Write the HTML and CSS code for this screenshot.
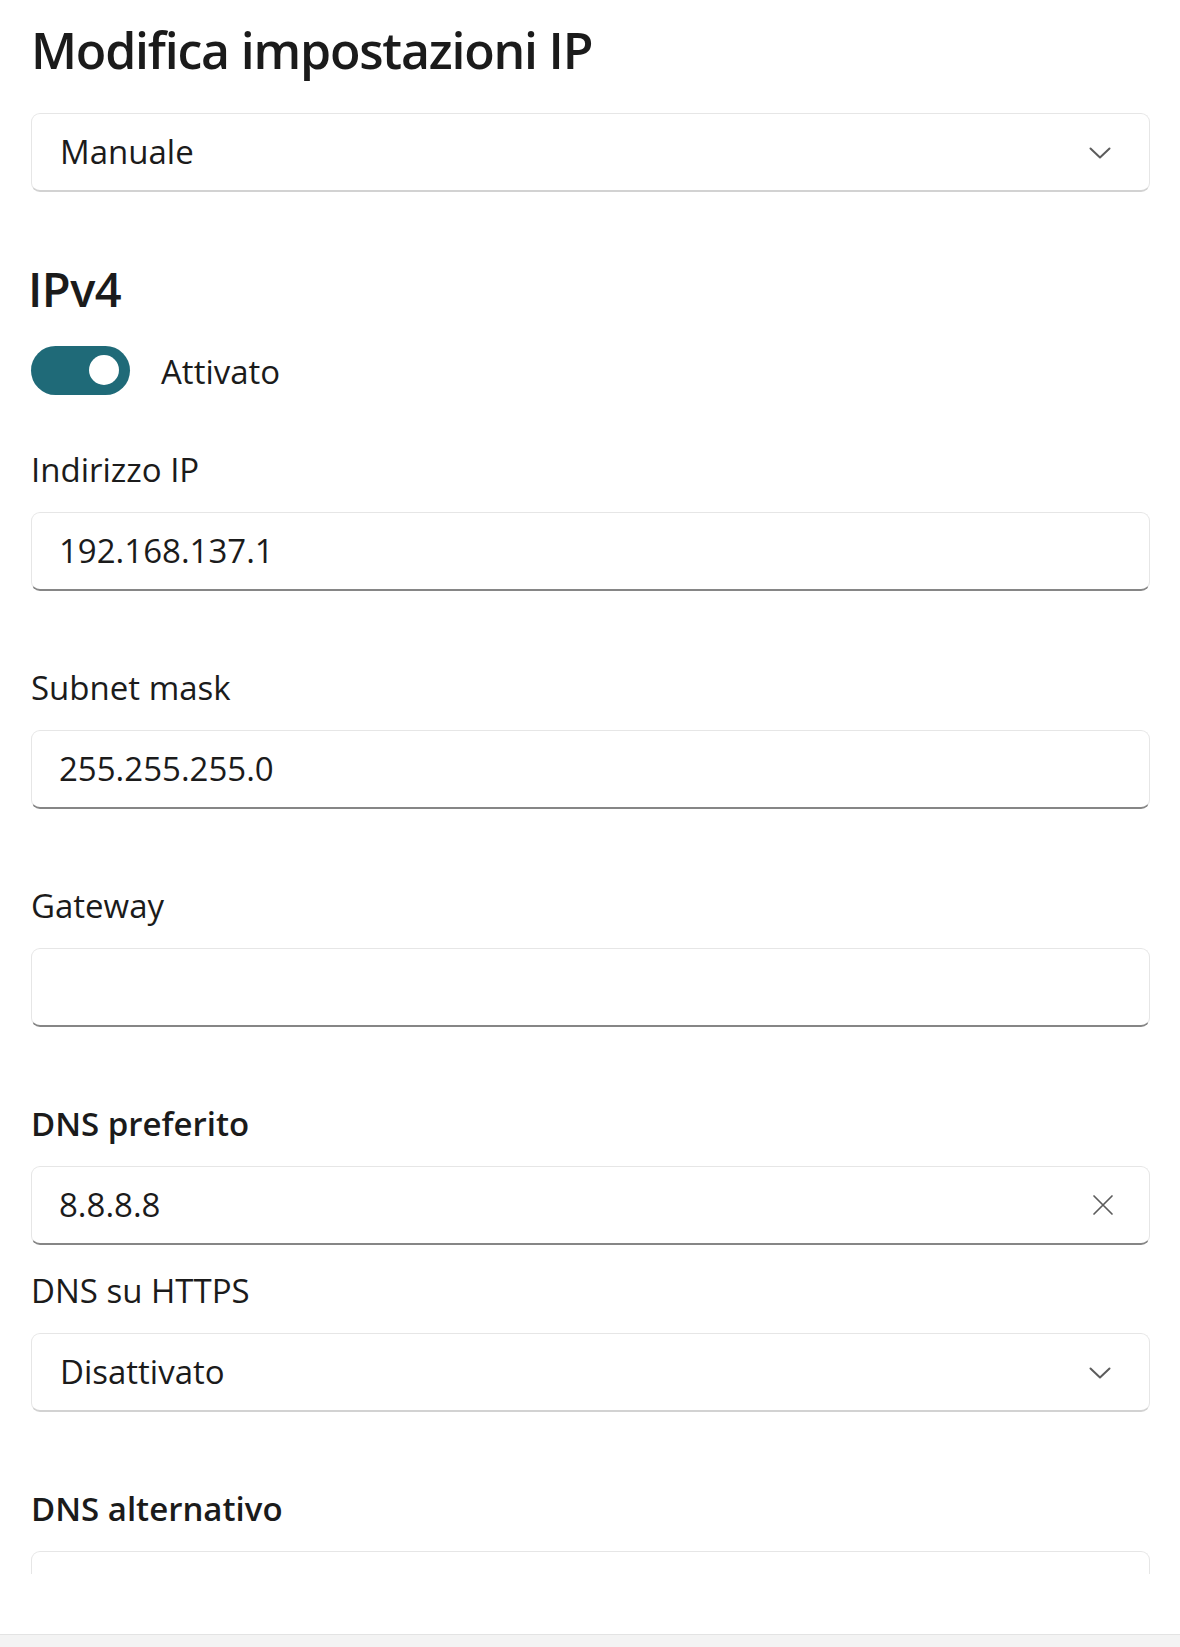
FILE: index.html
```html
<!DOCTYPE html>
<html lang="it">
<head>
<meta charset="utf-8">
<title>Modifica impostazioni IP</title>
<link rel="stylesheet" href="styles.css">
</head>
<body>
<div class="page">
  <div class="scroll">
    <h1 class="title">Modifica impostazioni IP</h1>
    <div class="combo">
      <span class="value">Manuale</span>
      <svg class="chev" width="22" height="12" viewBox="0 0 22 12"><path d="M1.5 1.5 L11 10.5 L20.5 1.5" fill="none" stroke="#5c5c5c" stroke-width="2" stroke-linecap="round" stroke-linejoin="round"/></svg>
    </div>

    <h2 class="section">IPv4</h2>
    <div class="toggle-row">
      <div class="toggle"><div class="knob"></div></div>
      <span class="toggle-label">Attivato</span>
    </div>

    <div class="field first">
      <div class="label">Indirizzo IP</div>
      <div class="input"><span class="value">192.168.137.1</span></div>
    </div>

    <div class="field">
      <div class="label">Subnet mask</div>
      <div class="input"><span class="value">255.255.255.0</span></div>
    </div>

    <div class="field">
      <div class="label">Gateway</div>
      <div class="input"><span class="value"></span></div>
    </div>

    <div class="field">
      <div class="label strong">DNS preferito</div>
      <div class="input">
        <span class="value">8.8.8.8</span>
        <svg class="clear" width="22" height="22" viewBox="0 0 22 22"><path d="M2 2 L20 20 M20 2 L2 20" fill="none" stroke="#5c5c5c" stroke-width="1.7" stroke-linecap="round"/></svg>
      </div>
      <div class="label sub">DNS su HTTPS</div>
      <div class="combo">
        <span class="value">Disattivato</span>
        <svg class="chev" width="22" height="12" viewBox="0 0 22 12"><path d="M1.5 1.5 L11 10.5 L20.5 1.5" fill="none" stroke="#5c5c5c" stroke-width="2" stroke-linecap="round" stroke-linejoin="round"/></svg>
      </div>
    </div>

    <div class="field">
      <div class="label strong">DNS alternativo</div>
      <div class="input"><span class="value"></span></div>
    </div>
  </div>
  <div class="footer"></div>
</div>
</body>
</html>
```

FILE: styles.css
```css
* { box-sizing: border-box; }

html, body {
  margin: 0;
  padding: 0;
  background: #ffffff;
}

body {
  font-family: "Open Sans", "Noto Sans", "Liberation Sans", sans-serif;
  color: #1b1b1b;
}

.page {
  width: 1180px;
  height: 1647px;
  display: flex;
  flex-direction: column;
}

.scroll {
  height: 1574px;
  overflow: hidden;
  padding: 18px 30px 0 31px;
}

.title {
  margin: 0;
  font-size: 50px;
  line-height: 64px;
  font-weight: 600;
  letter-spacing: -1.2px;
}

.combo,
.input {
  display: flex;
  align-items: center;
  height: 79px;
  width: 1119px;
  background: #ffffff;
  border: 1px solid #e6e6e6;
  border-radius: 9px;
  padding: 0 0 0 27px;
}

.combo {
  margin-top: 31px;
  border-bottom: 2px solid #d2d2d2;
  padding-left: 28px;
}

.input {
  margin-top: 18px;
  border-bottom: 2px solid #868686;
}

.value {
  flex: 1;
  font-size: 33px;
  line-height: 48px;
  color: #1b1b1b;
}

.chev {
  margin-right: 38px;
  margin-top: 2px;
}

.clear {
  margin-right: 35px;
}

.section {
  margin: 69px 0 0 -3px;
  font-size: 47px;
  line-height: 56px;
  font-weight: 600;
  letter-spacing: -0.5px;
}

.toggle-row {
  margin-top: 27px;
  display: flex;
  align-items: center;
  gap: 31px;
}

.toggle {
  width: 99px;
  height: 49px;
  border-radius: 25px;
  background: #1f6a78;
  display: flex;
  align-items: center;
  justify-content: flex-end;
  padding-right: 11px;
}

.knob {
  width: 30px;
  height: 30px;
  border-radius: 50%;
  background: #ffffff;
}

.toggle-label {
  font-size: 33px;
  line-height: 48px;
  padding-top: 4px;
}

.field {
  margin-top: 73px;
}

.field.first {
  margin-top: 50px;
}

.label {
  font-size: 33px;
  line-height: 48px;
}

.label.strong {
  font-weight: 600;
}

.label.sub {
  margin-top: 22px;
}

.field .combo {
  margin-top: 18px;
}

.footer {
  margin-top: auto;
  height: 13px;
  background: #f3f3f3;
  border-top: 1px solid #e3e3e3;
}
```
